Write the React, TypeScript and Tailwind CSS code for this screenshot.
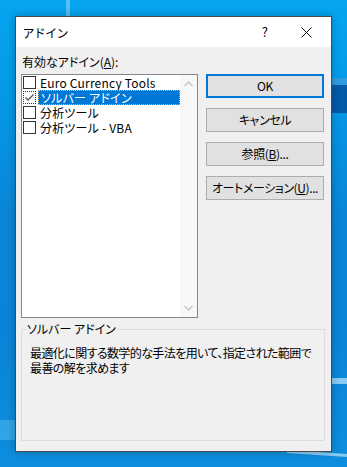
import React from "react";

const font = {
  fontFamily: '"Noto Sans CJK JP", "Noto Sans", sans-serif',
  fontFeatureSettings: '"palt"',
} as React.CSSProperties;

function Check({ checked, focus }: { checked?: boolean; focus?: boolean }) {
  return (
    <div
      className={
        "w-[13px] h-[13px] shrink-0 bg-white flex items-center justify-center " +
        (focus ? "border border-dotted border-[#333]" : "border border-[#333]")
      }
    >
      {checked && (
        <svg width="11" height="11" viewBox="0 0 11 11">
          <path d="M1.5 5.5 L4 8 L9.5 2.5" fill="none" stroke="#555" strokeWidth="1.3" />
        </svg>
      )}
    </div>
  );
}

function Row({ label, selected, checked }: { label: string; selected?: boolean; checked?: boolean }) {
  return (
    <div className="h-[15px] flex items-center overflow-hidden">
      <div className="ml-[1px]">
        <Check checked={checked} focus={selected} />
      </div>
      <div
        className={
          "ml-[2px] h-[15px] flex items-center pl-[2px] whitespace-nowrap " +
          (selected ? "flex-1 bg-[#0078d7] text-white border border-dotted border-[#f7b35a]" : "text-black")
        }
      >
        <span className="leading-[13px] tracking-[0.2px]">{label}</span>
      </div>
    </div>
  );
}

function Btn({ children, primary }: { children: React.ReactNode; primary?: boolean }) {
  return (
    <div
      className={
        "h-[24px] w-[118px] flex items-center justify-center bg-[#e1e1e1] text-black text-[12px] whitespace-nowrap tracking-[-0.4px] " +
        (primary ? "border-2 border-[#0078d7]" : "border border-[#adadad]")
      }
    >
      {children}
    </div>
  );
}

export default function App() {
  return (
    <div
      className="w-[347px] h-[467px] relative overflow-hidden"
      style={{
        ...font,
        background:
          "linear-gradient(180deg, #06a5f0 0%, #049ae8 20%, #0a86d8 45%, #0a84d8 70%, #0d8edd 100%)",
      }}
    >
      {/* desktop decoration */}
      <div className="absolute left-[66px] top-0 w-[4px] h-[20px] bg-[#7cc8f2] opacity-70" />
      <div className="absolute right-0 top-[78px] w-[20px] h-[7px] bg-[#2f9be0]" />
      <div className="absolute right-0 top-[85px] w-[20px] h-[28px] bg-[#0559a8]" />
      <div className="absolute right-0 top-[378px] w-[20px] h-[6px] bg-[#a9dcf7] opacity-80" />
      <div className="absolute left-0 top-[420px] w-[16px] h-[20px] bg-[#49b5ef] opacity-60" />
      <div className="absolute right-0 top-[452px] w-[60px] h-[3px] bg-[#bfe6fb] opacity-70 rotate-[4deg]" />

      {/* window */}
      <div className="absolute left-[15px] top-[16px] w-[317px] h-[436px] border border-[#4a4a4a] bg-[#f0f0f0] flex flex-col shadow-[0_0_8px_rgba(0,0,0,0.25)]">
        <div className="h-[30px] bg-white flex items-center text-[12px] text-black shrink-0">
          <span className="ml-[7px] mt-[1px] tracking-[1px]">アドイン</span>
          <span className="ml-auto mr-[33px] text-[13px]">?</span>
          <svg width="11" height="11" viewBox="0 0 11 11" className="mr-[19px]">
            <path d="M0.5 0.5 L10.5 10.5 M10.5 0.5 L0.5 10.5" stroke="#111" strokeWidth="1" />
          </svg>
        </div>

        <div className="flex-1 pl-[5px] pr-[7px] text-[12px] text-black">
          <div className="h-[27px] flex items-center ml-[1px] pt-[3px]">
            有効なアドイン(<span className="underline">A</span>):
          </div>
          <div className="flex gap-[8px]">
            <div className="w-[177px] h-[244px] border border-[#828790] bg-white flex">
              <div className="flex-1 flex flex-col">
                <Row label="Euro Currency Tools" />
                <Row label="ソルバー アドイン" selected checked />
                <Row label="分析ツール" />
                <Row label="分析ツール - VBA" />
              </div>
              <div className="w-[17px] bg-[#f7f7f7] flex flex-col justify-between items-center py-[6px]">
                <svg width="9" height="6" viewBox="0 0 9 6">
                  <path d="M0.5 5 L4.5 1 L8.5 5" fill="none" stroke="#c4c4c4" strokeWidth="1.4" />
                </svg>
                <svg width="9" height="6" viewBox="0 0 9 6">
                  <path d="M0.5 1 L4.5 5 L8.5 1" fill="none" stroke="#c4c4c4" strokeWidth="1.4" />
                </svg>
              </div>
            </div>
            <div className="flex flex-col gap-[10px]">
              <Btn primary>OK</Btn>
              <Btn>キャンセル</Btn>
              <Btn>
                参照(<span className="underline">B</span>)...
              </Btn>
              <Btn>
                オートメーション(<span className="underline">U</span>)...
              </Btn>
            </div>
          </div>

          <div className="relative mt-[11px] w-[304px] h-[112px] border border-[#dcdcdc]">
            <div className="absolute left-[5px] top-[-9px] bg-[#f0f0f0] pr-[1px] leading-[16px]">ソルバー アドイン</div>
            <div className="pt-[15px] pl-[8px] leading-[15px] whitespace-nowrap tracking-[-0.6px]">
              <div>最適化に関する数学的な手法を用いて、指定された範囲で</div>
              <div>最善の解を求めます</div>
            </div>
          </div>
        </div>
      </div>
    </div>
  );
}
